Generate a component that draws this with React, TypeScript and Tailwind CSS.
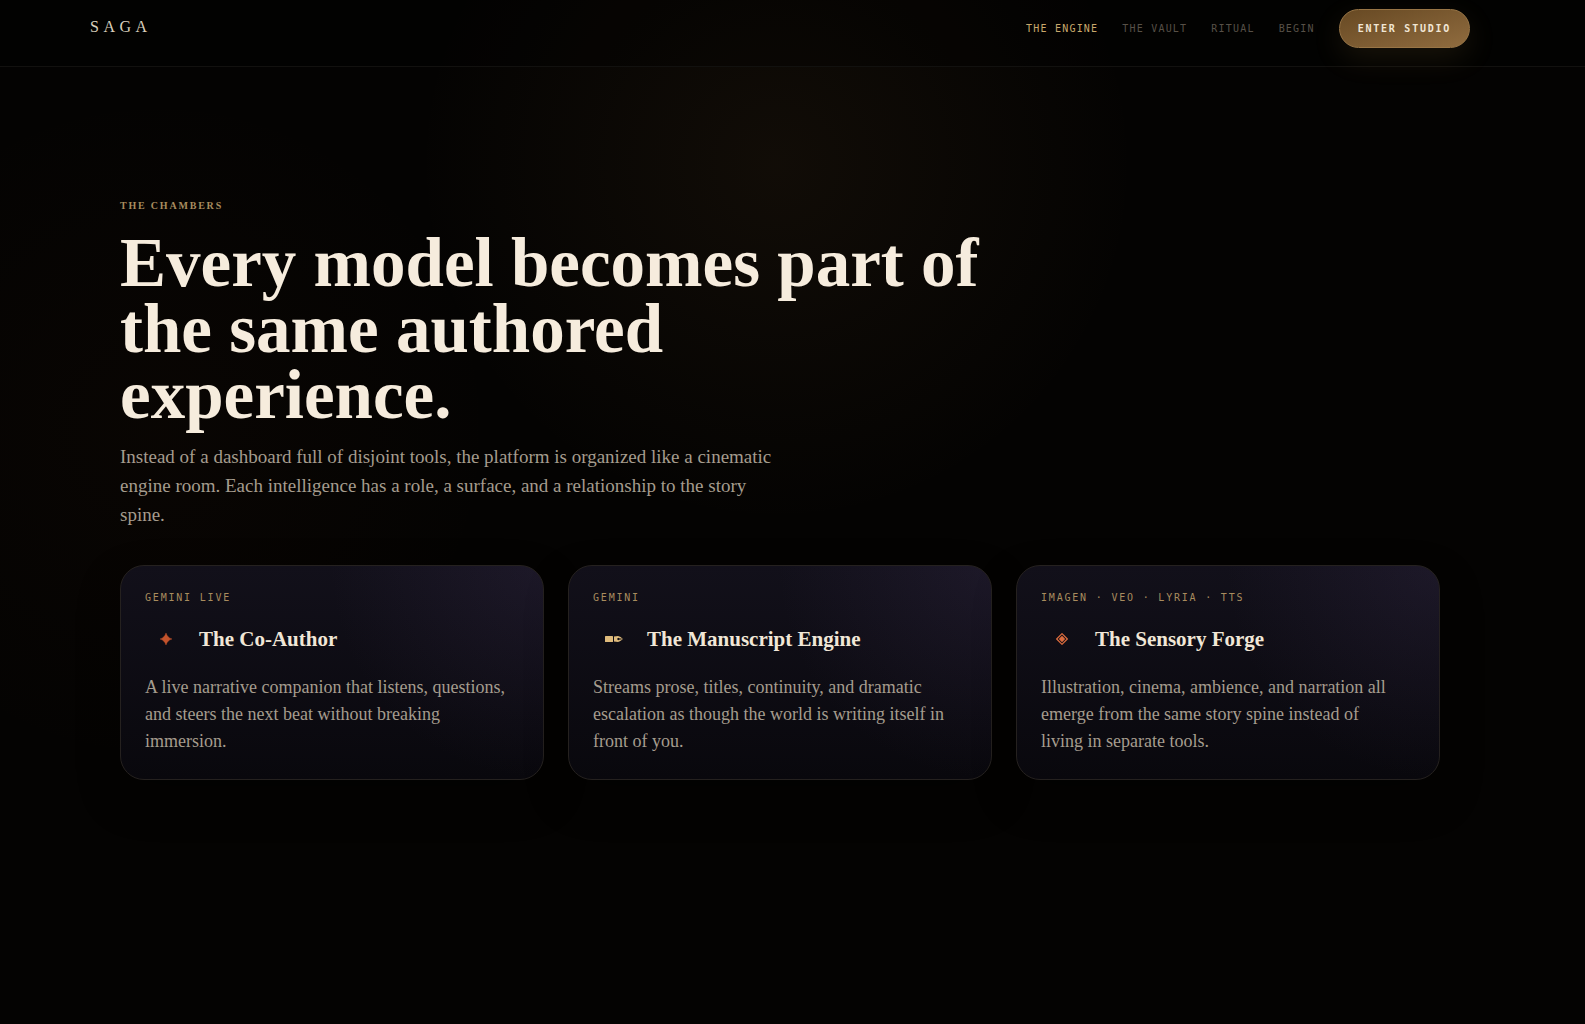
import type { ReactNode } from "react";

const MONO = "font-['DejaVu_Sans_Mono',monospace]";

type Chamber = {
  tag: string;
  title: string;
  body: string;
  icon: ReactNode;
};

function StarIcon() {
  return (
    <svg width="12" height="12" viewBox="0 0 12 12" fill="#c4532c" aria-hidden="true">
      <path d="M6 0 C6.8 3 9 5.2 12 6 C9 6.8 6.8 9 6 12 C5.2 9 3 6.8 0 6 C3 5.2 5.2 3 6 0 Z" stroke="#c4532c" strokeWidth="0.4" />
    </svg>
  );
}

function PenIcon() {
  return (
    <svg width="18" height="8" viewBox="0 0 18 8" aria-hidden="true">
      <rect x="0" y="1" width="8" height="6" rx="0.6" fill="#dfbb7c" />
      <path
        fillRule="evenodd"
        fill="#dfbb7c"
        d="M9 1.6 L13 1 C15 1.4 16.4 2.6 17.8 4 C16.4 5.4 15 6.6 13 7 L9 6.4 Z M12.2 4 A1.2 1.2 0 0 0 14.5 4.4 H16.6 V3.6 H14.5 A1.2 1.2 0 0 0 12.2 4 Z"
      />
    </svg>
  );
}

function ForgeIcon() {
  return (
    <svg width="12" height="12" viewBox="0 0 12 12" aria-hidden="true">
      <path d="M6 0.7 L11.3 6 L6 11.3 L0.7 6 Z" fill="none" stroke="#dc6c3e" strokeWidth="1.2" />
      <path d="M6 2.8 L9.2 6 L6 9.2 L2.8 6 Z" fill="#dc6c3e" />
    </svg>
  );
}

const chambers: Chamber[] = [
  {
    tag: "GEMINI LIVE",
    title: "The Co-Author",
    body: "A live narrative companion that listens, questions, and steers the next beat without breaking immersion.",
    icon: <StarIcon />,
  },
  {
    tag: "GEMINI",
    title: "The Manuscript Engine",
    body: "Streams prose, titles, continuity, and dramatic escalation as though the world is writing itself in front of you.",
    icon: <PenIcon />,
  },
  {
    tag: "IMAGEN · VEO · LYRIA · TTS",
    title: "The Sensory Forge",
    body: "Illustration, cinema, ambience, and narration all emerge from the same story spine instead of living in separate tools.",
    icon: <ForgeIcon />,
  },
];

const links = [
  { label: "THE ENGINE", active: true },
  { label: "THE VAULT", active: false },
  { label: "RITUAL", active: false },
  { label: "BEGIN", active: false },
];

function Header() {
  return (
    <header className="border-b border-[#12110f] bg-black/30 pr-[25px]">
      <div className="mx-auto flex max-w-[1380px] items-center justify-between pt-[9px] pb-[18px]">
        <a href="#top" className="pb-1 text-[16px] leading-5 tracking-[0.28em] text-[#d9cfbd]">
          SAGA
        </a>
        <nav className={`flex items-center gap-6 text-[10px] ${MONO}`}>
          {links.map((link) => (
            <a
              key={link.label}
              href="#top"
              className={`tracking-[0.12em] ${link.active ? "text-[#c9a86c]" : "text-[#575047]"}`}
            >
              {link.label}
            </a>
          ))}
          <button
            type="button"
            className="h-[39px] rounded-full border border-[#987546] bg-linear-to-br from-[#674923] to-[#906c3f] px-[18px] font-bold tracking-[0.175em] text-[#f1e6d4] shadow-[0_10px_30px_rgba(201,154,80,0.12)]"
          >
            ENTER STUDIO
          </button>
        </nav>
      </div>
    </header>
  );
}

function ChamberCard({ tag, title, body, icon }: Chamber) {
  return (
    <article className="rounded-3xl border border-[#25211f] bg-[radial-gradient(circle_at_top_right,rgba(84,66,112,0.17),transparent_45%),linear-gradient(180deg,#12101a,#09080d)] p-6 shadow-[0_18px_40px_rgba(0,0,0,0.35)]">
      <p className={`text-[10px] leading-4 tracking-[0.18em] text-[#a88c5e] ${MONO}`}>{tag}</p>
      <div className="mt-3 flex items-center gap-3">
        <span className="flex size-[42px] items-center justify-center">{icon}</span>
        <h3 className="text-[21px] leading-7 font-bold text-[#f1e7d7]">{title}</h3>
      </div>
      <p className="mt-3.5 pr-[10px] text-[18px] leading-[27px] text-[#a59c8e]">{body}</p>
    </article>
  );
}

export default function App() {
  return (
    <div
      id="top"
      className="min-h-screen bg-[#040302] bg-[radial-gradient(circle_at_49%_16%,rgba(190,135,70,0.07),transparent_360px),radial-gradient(circle_at_10%_42%,rgba(150,70,25,0.035),transparent_340px)] font-['Liberation_Serif',serif]"
    >
      <Header />
      <main className="pr-[25px]">
        <section className="mx-auto max-w-[1320px] pt-[131px]">
          <p className="text-[10px] leading-4 font-bold tracking-[0.18em] text-[#a88c5e]">THE CHAMBERS</p>
          <h2 className="mt-4 max-w-[880px] text-[69px] leading-[66px] font-bold text-[#f6ecdd]">
            Every model becomes part of the same authored experience.
          </h2>
          <p className="mt-3.5 max-w-[670px] text-[19px] leading-[29px] text-[#a59c8e]">
            Instead of a dashboard full of disjoint tools, the platform is organized like a cinematic engine
            room. Each intelligence has a role, a surface, and a relationship to the story spine.
          </p>
          <div className="mt-9 grid grid-cols-3 gap-6">
            {chambers.map((chamber) => (
              <ChamberCard key={chamber.title} {...chamber} />
            ))}
          </div>
        </section>
      </main>
    </div>
  );
}
